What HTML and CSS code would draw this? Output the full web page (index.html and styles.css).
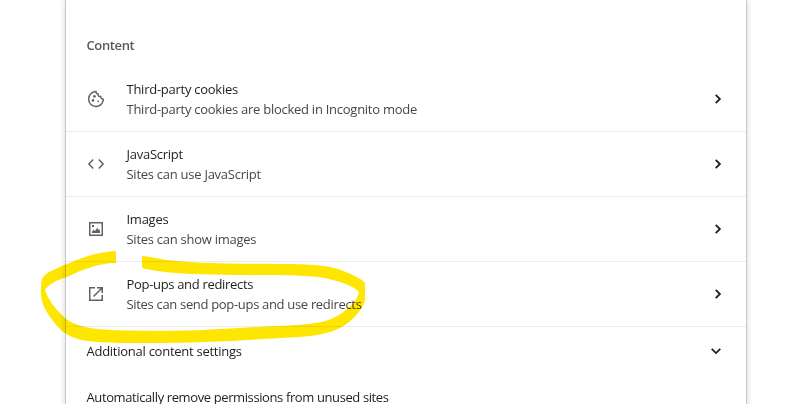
FILE: index.html
```html
<!DOCTYPE html>
<html lang="en">
<head>
    <meta charset="UTF-8">
    <meta name="viewport" content="width=device-width, initial-scale=1.0">
    <title>Site settings</title>
    <link rel="stylesheet" href="styles.css">
</head>
<body>
    <main class="settings-card">
        <h2 class="section-title">Content</h2>
        <div class="row">
            <svg class="row-icon" viewBox="0 0 20 20">
                <path d="M10 2.600a7.400 7.400 0 1 0 7.400 7.600c-1.600 0-2.700-1-2.700-2.600-1.800.2-2.900-1-2.600-2.600C10.600 5 9.900 4 10 2.600z" fill="none" stroke="currentColor" stroke-width="1.500"/>
                <circle cx="8.500" cy="7.400" r="1.300"/>
                <circle cx="7" cy="11.400" r="1.300"/>
                <circle cx="12.200" cy="12.300" r="0.900"/>
            </svg>
            <div class="row-text">
                <div class="label">Third-party cookies</div>
                <div class="sub-label">Third-party cookies are blocked in Incognito mode</div>
            </div>
            <svg class="arrow" viewBox="0 0 20 20"><path d="M7.700 5.800l4.200 4.200-4.200 4.200"/></svg>
        </div>
        <div class="row">
            <svg class="row-icon" viewBox="0 0 20 20">
                <path d="M7.200 5.500L2.900 10l4.300 4.500M12.800 5.500l4.300 4.500-4.300 4.500" fill="none" stroke="currentColor" stroke-width="1.500"/>
            </svg>
            <div class="row-text">
                <div class="label">JavaScript</div>
                <div class="sub-label">Sites can use JavaScript</div>
            </div>
            <svg class="arrow" viewBox="0 0 20 20"><path d="M7.700 5.800l4.200 4.200-4.200 4.200"/></svg>
        </div>
        <div class="row">
            <svg class="row-icon" viewBox="0 0 20 20">
                <rect x="3.750" y="3.750" width="12.500" height="12.500" fill="none" stroke="currentColor" stroke-width="1.500"/>
                <path d="M6 14v-1.500l1.700-1.700 1.300 1.200 2.300-3.200 1.300 2.200.7-.8.700 1.300V14zM6 6h2v2H6z"/>
            </svg>
            <div class="row-text">
                <div class="label">Images</div>
                <div class="sub-label">Sites can show images</div>
            </div>
            <svg class="arrow" viewBox="0 0 20 20"><path d="M7.700 5.800l4.200 4.200-4.200 4.200"/></svg>
        </div>
        <div class="row">
            <svg class="row-icon" viewBox="0 0 20 20">
                <path d="M9 3.750H3.750v12.500h12.500V11M11 3.750h5.250V9M16 4l-8.500 8.500" fill="none" stroke="currentColor" stroke-width="1.500"/>
            </svg>
            <div class="row-text tight">
                <div class="label">Pop-ups and redirects</div>
                <div class="sub-label">Sites can send pop-ups and use redirects</div>
            </div>
            <svg class="arrow" viewBox="0 0 20 20"><path d="M7.700 5.800l4.200 4.200-4.200 4.200"/></svg>
        </div>
        <div class="expand-row">
            <span>Additional content settings</span>
            <svg class="arrow" viewBox="0 0 20 20"><path d="M5.700 7.900l4.300 4.200 4.300-4.200"/></svg>
        </div>
        <div class="toggle-row">Automatically remove permissions from unused sites</div>
    </main>

    <!-- marker stroke around the pop-ups row -->
    <svg class="marker" viewBox="0 0 800 404">
        <path d="M116 251C98 252 87 256 72 262C60 267 49 271 45 275C41 279 41 281 41 294C41 304 48 316 58 327C70 340 86 343 130 343C210 343 230 341 280 338C308 337 327 335 342 327C354 320 365 306 365 299V283C361 278 349 273 338 269C325 265 308 264 280 264C230 263.500 180 264 147 256.500L142 256V268C165 274 200 274.500 240 275C290 275.500 310 275 329 279C342 282 353 286 359 292C357 301 350 307 342 313C327 323 316 324 280 326C230 328 200 331 160 331C110 330 77 332 62 315C54 307 48 299 45 290C49 284 57 280 67 277C82 270 98 263 116 263Z"/>
    </svg>
</body>
</html>
```
FILE: styles.css
```css
body {
    margin: 0;
    height: 404px;
    overflow: hidden;
    background-color: #fff;
    font-family: 'Segoe UI', 'Open Sans', 'Noto Sans', sans-serif;
    font-size: 13px;
    line-height: 20px;
    letter-spacing: -0.26px;
    color: #1f1f1f;
}
.settings-card {
    box-sizing: border-box;
    width: 680px;
    height: 420px;
    margin-left: 66px;
    padding-top: 35px;
    background-color: #fff;
    box-shadow: 0 0 0 1px #c8c8c8, 0 0 7px rgba(0, 0, 0, 0.22);
}
.section-title {
    margin: 0 0 12px;
    padding-left: 20.5px;
    font-size: 13px;
    font-weight: 600;
    letter-spacing: -0.38px;
    color: #5a5a5a;
}
.row {
    box-sizing: border-box;
    height: 65px;
    display: flex;
    align-items: center;
    padding: 0 20px;
    border-bottom: 1px solid #ececec;
}
.row-icon {
    width: 20px;
    height: 20px;
    margin-right: 20px;
    color: #5f6368;
    fill: currentColor;
}
.row-text {
    flex: 1;
    padding: 0 0 1px 0.5px;
}
.row-text.tight {
    letter-spacing: -0.32px;
}
.sub-label {
    color: #474747;
}
.arrow {
    width: 20px;
    height: 20px;
    margin-right: -2px;
    fill: none;
    stroke: #1f1f1f;
    stroke-width: 1.8;
}
.expand-row {
    height: 48px;
    display: flex;
    align-items: center;
    justify-content: space-between;
    padding: 0 20px 0 20.5px;
}
.expand-row .arrow {
    margin-right: 0;
}
.toggle-row {
    padding: 12px 20.5px;
    letter-spacing: -0.39px;
}
.marker {
    position: absolute;
    top: 0;
    left: 0;
    width: 800px;
    height: 404px;
    fill: #ffe600;
    mix-blend-mode: multiply;
    pointer-events: none;
}
```
